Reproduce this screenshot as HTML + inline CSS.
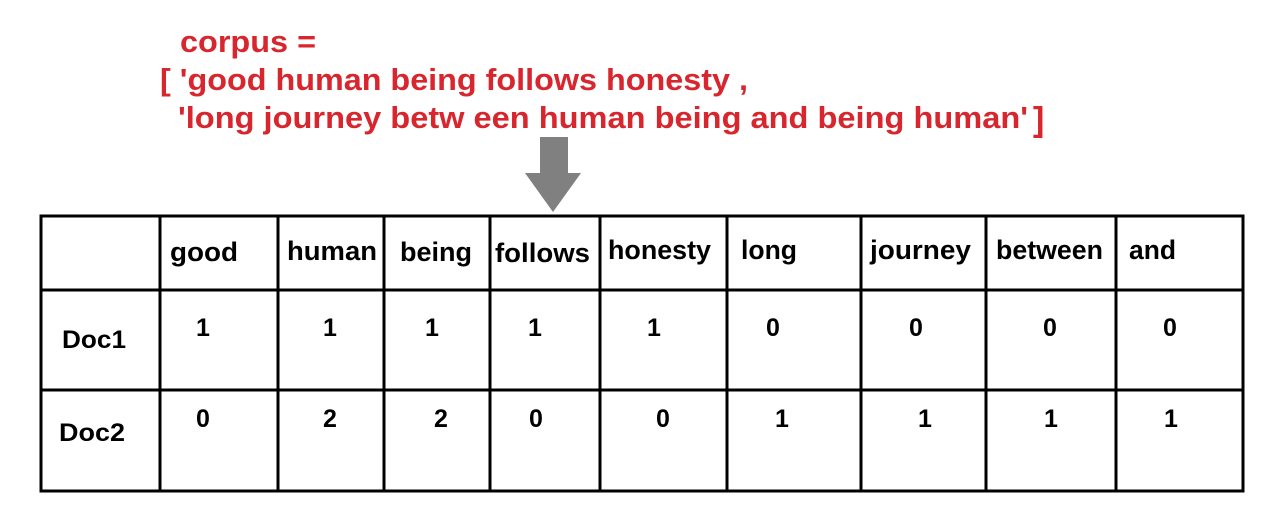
<!DOCTYPE html>
<html><head><style>html,body{margin:0;padding:0;background:#fff;}svg{display:block}</style></head>
<body>
<svg width="1273" height="522" xmlns="http://www.w3.org/2000/svg" font-family="Liberation Sans, Arial, sans-serif" font-weight="bold">
<g fill="#d8262e" font-size="31">
<text x="180" y="52" textLength="136" lengthAdjust="spacingAndGlyphs">corpus =</text>
<text x="160" y="90" textLength="588" lengthAdjust="spacingAndGlyphs">[ 'good human being follows honesty ,</text>
<text x="178" y="128" textLength="850" lengthAdjust="spacingAndGlyphs">'long journey betw een human being and being human'</text>
<text x="1033" y="131" font-size="34">]</text>
</g>
<polygon points="540,137 568,137 568,173 581,173 553,212 525,173 540,173" fill="#808080"/>
<g stroke="#000" stroke-width="3" fill="none">
<rect x="41" y="216" width="1202" height="275"/>
<line x1="41" y1="290" x2="1243" y2="290"/>
<line x1="41" y1="390" x2="1243" y2="390"/>
<line x1="160" y1="216" x2="160" y2="491"/>
<line x1="278" y1="216" x2="278" y2="491"/>
<line x1="384" y1="216" x2="384" y2="491"/>
<line x1="490" y1="216" x2="490" y2="491"/>
<line x1="600" y1="216" x2="600" y2="491"/>
<line x1="727" y1="216" x2="727" y2="491"/>
<line x1="861" y1="216" x2="861" y2="491"/>
<line x1="986" y1="216" x2="986" y2="491"/>
<line x1="1116" y1="216" x2="1116" y2="491"/>
</g>
<g fill="#000" font-size="27">
<text x="170" y="261" textLength="68" lengthAdjust="spacingAndGlyphs">good</text>
<text x="287" y="260" textLength="90" lengthAdjust="spacingAndGlyphs">human</text>
<text x="400" y="261" textLength="72" lengthAdjust="spacingAndGlyphs">being</text>
<text x="495" y="262" textLength="95" lengthAdjust="spacingAndGlyphs">follows</text>
<text x="608" y="259" textLength="103" lengthAdjust="spacingAndGlyphs">honesty</text>
<text x="741" y="259" textLength="56" lengthAdjust="spacingAndGlyphs">long</text>
<text x="870" y="259" textLength="101" lengthAdjust="spacingAndGlyphs">journey</text>
<text x="996" y="259" textLength="107" lengthAdjust="spacingAndGlyphs">between</text>
<text x="1129" y="259" textLength="47" lengthAdjust="spacingAndGlyphs">and</text>
</g>
<g fill="#000" font-size="25">
<text x="62" y="348" textLength="64" lengthAdjust="spacingAndGlyphs">Doc1</text>
<text x="59" y="441" textLength="66" lengthAdjust="spacingAndGlyphs">Doc2</text>
</g>
<g fill="#000" font-size="25" text-anchor="middle">
<text x="203" y="336">1</text><text x="330" y="336">1</text><text x="432" y="336">1</text><text x="535" y="336">1</text><text x="654" y="336">1</text><text x="773" y="336">0</text><text x="916" y="336">0</text><text x="1050" y="336">0</text><text x="1170" y="336">0</text>
<text x="203" y="427">0</text><text x="330" y="427">2</text><text x="441" y="427">2</text><text x="536" y="427">0</text><text x="663" y="427">0</text><text x="782" y="427">1</text><text x="925" y="427">1</text><text x="1051" y="427">1</text><text x="1171" y="427">1</text>
</g>
</svg>
</body></html>
